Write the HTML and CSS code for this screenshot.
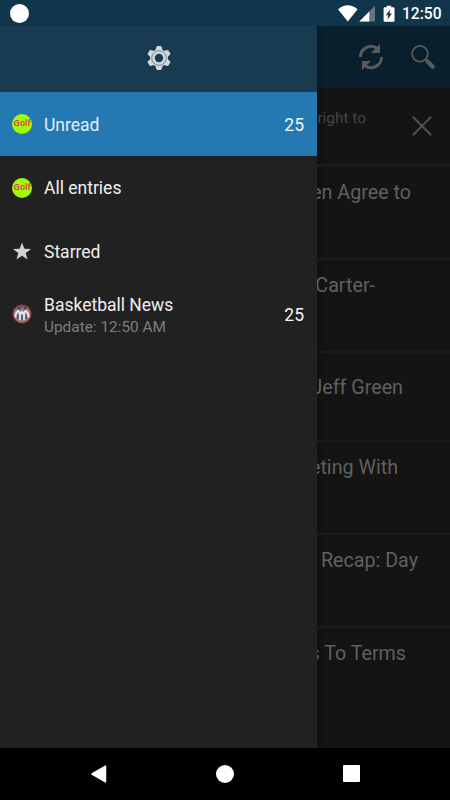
FILE: index.html
```html
<!DOCTYPE html>
<html lang="en">
<head>
<meta charset="utf-8">
<title>News reader</title>
<link rel="stylesheet" href="styles.css">
</head>
<body>
<div class="phone">
  <header class="status">
    <span class="dot"></span>
    <svg class="status-icons" width="58" height="18" viewBox="0 0 58 18" fill="#fff">
      <path d="M0 4.300Q9.800-3.800 19.600 4.300L9.800 16.600Z"/>
      <path d="M37 .8V16.600H21.300Z" opacity=".33"/>
      <path d="M31.300 6.600V16.600H21.300Z"/>
      <path fill-rule="evenodd" d="M46.600 2.200h2.200V.8h4.400v1.400h2.300a1 1 0 0 1 1 1v12.600a1 1 0 0 1-1 1h-8.900a1 1 0 0 1-1-1V3.200a1 1 0 0 1 1-1ZM52.300 4.200l-4.400 6h2.400l-.8 4.500 4.400-6.200h-2.400Z"/>
    </svg>
    <span class="clock">12:50</span>
  </header>
  <main class="main">
    <nav class="drawer">
      <div class="drawer-head">
        <svg width="26" height="26" viewBox="-13 -13 26 26">
          <g fill="#d0d8dc">
            <path id="tooth" d="M-1.800-12h3.600l.9.900 1 4.100h-7.400l1-4.100Z"/>
            <use href="#tooth" transform="rotate(60)"/><use href="#tooth" transform="rotate(120)"/><use href="#tooth" transform="rotate(180)"/><use href="#tooth" transform="rotate(240)"/><use href="#tooth" transform="rotate(300)"/>
            <circle r="9"/>
          </g>
          <circle r="7.300" fill="none" stroke="#5c7482" stroke-width=".8"/>
          <circle r="4.200" fill="#183b52"/>
        </svg>
      </div>
      <div class="item selected">
        <span class="golf">Golf</span><span class="name">Unread</span><span class="count">25</span>
      </div>
      <div class="item"><span class="golf">Golf</span><span class="name">All entries</span></div>
      <div class="item">
        <svg class="icon" width="20" height="20" viewBox="0 0 20 20"><path fill="#d2d2d2" d="M10 .5l2.300 6.300 6.800.2-5.400 4.100 1.900 6.500L10 13.800l-5.600 3.800 1.900-6.500L.9 7l6.800-.2Z"/></svg>
        <span class="name">Starred</span>
      </div>
      <div class="item feed">
        <svg class="icon" width="20" height="20" viewBox="0 0 20 20">
          <circle cx="10" cy="10" r="8.900" fill="#85858c" stroke="#b02c2e" stroke-width="1.300" stroke-dasharray="4 1"/>
          <path d="M5 5l2-2 1 3M12 6l1-3 2 2M7 3h6" fill="none" stroke="#404048" stroke-width="1.200"/>
          <path d="M3.500 13.500Q3.500 8 6.500 7L8.500 10l1.500-2 1.500 2 2-3Q16.500 8 16.500 13.500" fill="none" stroke="#e5e5ea" stroke-width="2"/>
          <path d="M8 9v7M12 9v7" stroke="#e5e5ea" stroke-width="1.800"/>
          <path d="M5.700 11v4M14.300 11v4M10 11v5" stroke="#4c4c54" stroke-width="1.200"/>
        </svg>
        <span class="name">Basketball News<small>Update: 12:50 AM</small></span><span class="count">25</span>
      </div>
    </nav>
    <section class="content">
      <div class="toolbar">
        <svg width="26" height="28" viewBox="0 0 26 28">
          <g id="arrow"><path d="M2.400 14A10.600 10.600 0 0 1 19 5.300" fill="none" stroke="#585a5b" stroke-width="3"/><path d="M22 1v9h-9Z" fill="#585a5b"/></g>
          <use href="#arrow" transform="rotate(180 13 14)"/>
        </svg>
        <svg width="26" height="26" viewBox="0 0 26 26" fill="none" stroke="#585a5b">
          <circle cx="10" cy="9.800" r="7.900" stroke-width="1.800"/>
          <path d="M15 15l3 3" stroke-width="2"/>
          <path d="M17.600 17.600l5.200 5.200" stroke-width="4.200" stroke-linecap="round"/>
        </svg>
      </div>
      <div class="hint">
        <span>right to</span>
        <svg width="20" height="20" viewBox="0 0 20 20"><path d="M.8.8l18.400 18.400M19.200.8L.8 19.200" stroke="#505050" stroke-width="2"/></svg>
      </div>
      <div class="entry agree">en Agree to</div>
      <div class="entry carter">Carter-</div>
      <div class="entry green">Jeff Green</div>
      <div class="entry meeting">eting With</div>
      <div class="entry recap">Recap: Day</div>
      <div class="entry terms">s To Terms</div>
    </section>
  </main>
  <footer class="navbar">
    <svg width="18" height="20" viewBox="0 0 18 20"><path d="M2 10L15.500 2.200v15.600Z" fill="#fff" stroke="#fff" stroke-width="1.500" stroke-linejoin="round"/></svg>
    <span class="home"></span>
    <span class="recent"></span>
  </footer>
</div>
</body>
</html>
```

FILE: styles.css
```css
* { box-sizing: border-box; }
body { margin: 0; background: #000; font-family: Roboto, sans-serif; }
svg { display: block; flex: none; }
.phone { width: 450px; height: 800px; display: grid; grid-template-columns: 450px; grid-template-rows: 26px 721.5px 1fr; overflow: hidden; }

.status { background: #11364c; display: flex; align-items: center; padding: 0 9px 0 10px; color: #fff; }
.dot { width: 19px; height: 19px; border-radius: 50%; background: #fff; }
.status-icons { margin: 1px 6px 0 auto; }
.clock { font-size: 15.6px; font-weight: 500; line-height: 26px; width: 39px; padding-top: 2px; white-space: nowrap; }

.main { display: flex; min-height: 0; }
.drawer { width: 317px; flex: none; background: #212121; }
.drawer-head { height: 66px; background: #183b52; display: flex; align-items: center; justify-content: center; padding-bottom: 2px; }
.item { height: 63.5px; display: flex; align-items: center; padding: 1px 13px 0 12px; color: #efefef; font-size: 17.5px; }
.selected { height: 64px; background: #2579b2; color: #e4edf4; padding-top: 1px; }
.icon, .golf { margin-right: 12px; }
.golf { width: 20px; height: 20px; border-radius: 50%; background: #a0fc05; color: #e8364f; font: 600 8.8px/19px "Noto Sans", sans-serif; letter-spacing: -0.1px; display: flex; justify-content: center; flex: none; margin-top: -1px; }
.name { flex: 1; line-height: 22px; white-space: nowrap; }
.feed .icon { margin-top: -2px; }
.feed .name { padding-top: 2px; }
.name small { display: block; font-size: 15.4px; color: #7d7d7d; }
.count { color: #f5f5f5; }

.content { flex: 1; min-width: 0; background: linear-gradient(90deg, #101010, #141414 9px); overflow: hidden; }
.toolbar { height: 62px; background: linear-gradient(90deg, #071a26, #091f2d 9px); display: flex; align-items: center; justify-content: flex-end; gap: 26px; padding-right: 14px; }
.hint { height: 78.5px; border-bottom: 3px solid #1c1c1c; display: flex; align-items: center; justify-content: flex-end; color: #454545; font-size: 15.4px; padding-right: 18px; }
.hint span { margin: 0 46px 16px 0; white-space: nowrap; }
.entry { height: 93px; border-bottom: 2px solid #1b1b1b; display: flex; justify-content: flex-end; padding-top: 13px; color: #606060; font-size: 19.7px; line-height: 26px; white-space: nowrap; }
.agree { padding-right: 39px; }
.carter { padding-right: 75px; }
.green { height: 89px; padding-top: 22px; padding-right: 47px; }
.meeting { padding-right: 52px; }
.recap { padding-right: 32px; }
.terms { height: 130px; padding-right: 44px; border: 0; }

.navbar { background: #000; display: flex; align-items: center; padding-left: 90px; }
.home { width: 18px; height: 18px; border-radius: 50%; background: #fff; margin-left: 108px; }
.recent { width: 17px; height: 17px; border-radius: 1px; background: #fff; margin-left: 109px; }
```
